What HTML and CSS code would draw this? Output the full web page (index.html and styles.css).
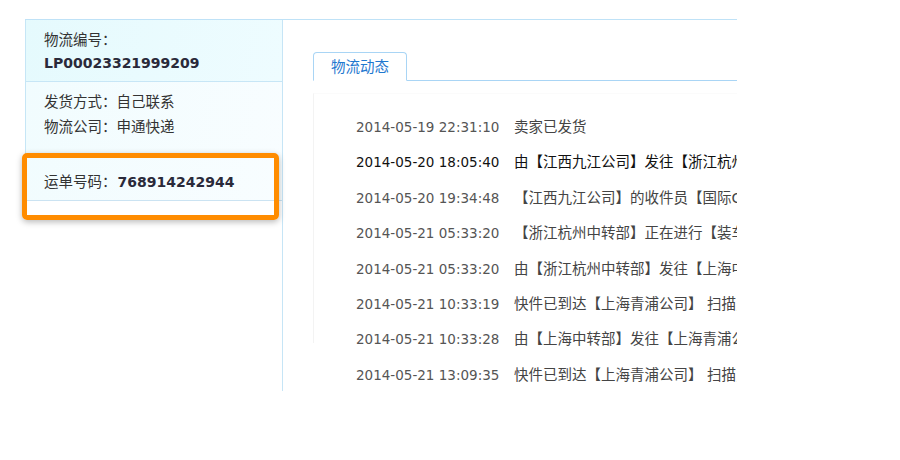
FILE: index.html
```html
<!DOCTYPE html>
<html lang="zh-CN">
<head>
<meta charset="utf-8">
<title>物流详情</title>
<link rel="stylesheet" href="styles.css">
</head>
<body>
<div class="page">
  <aside class="side">
    <div class="info">
      <div class="sec sec-no">
        <div class="lbl">物流编号：</div>
        <div class="num">LP00023321999209</div>
      </div>
      <div class="sec sec-detail">
        <div class="lbl">发货方式：自己联系</div>
        <div class="lbl">物流公司：申通快递</div>
        <div class="waybill"><span class="lbl">运单号码：</span><span class="num">768914242944</span></div>
      </div>
    </div>
    <div class="highlight"></div>
  </aside>
  <main class="main">
    <div class="tabs"><div class="tab">物流动态</div></div>
    <div class="track">
      <ul class="list">
        <li><span class="date">2014-05-19 22:31:10</span><span class="desc">卖家已发货</span></li>
        <li class="cur"><span class="date">2014-05-20 18:05:40</span><span class="desc">由【江西九江公司】发往【浙江杭州中转部】</span></li>
        <li><span class="date">2014-05-20 19:34:48</span><span class="desc">【江西九江公司】的收件员【国际C】已收件</span></li>
        <li><span class="date">2014-05-21 05:33:20</span><span class="desc">【浙江杭州中转部】正在进行【装车】扫描</span></li>
        <li><span class="date">2014-05-21 05:33:20</span><span class="desc">由【浙江杭州中转部】发往【上海中转部】</span></li>
        <li><span class="date">2014-05-21 10:33:19</span><span class="desc">快件已到达【上海青浦公司】 扫描员是【王伟】</span></li>
        <li><span class="date">2014-05-21 10:33:28</span><span class="desc">由【上海中转部】发往【上海青浦公司】</span></li>
        <li><span class="date">2014-05-21 13:09:35</span><span class="desc">快件已到达【上海青浦公司】 扫描员是【王伟】</span></li>
      </ul>
    </div>
  </main>
</div>
</body>
</html>
```
FILE: styles.css
```css
* { box-sizing: border-box; }
html, body { margin: 0; padding: 0; background: #fff; }
body {
  font-family: "DejaVu Sans", "Noto Sans CJK SC", sans-serif;
  font-size: 14px;
  color: #333;
  width: 900px;
  height: 460px;
  overflow: hidden;
}
.page {
  display: flex;
  margin: 19px 0 0 25px;
  width: 712px;
  height: 372px;
  border-top: 1px solid #bfe2f7;
}
.side {
  position: relative;
  width: 258px;
  flex: none;
  border-right: 1px solid #c6e5f6;
}
.info {
  border-left: 1px solid #c6e6f6;
}
.sec { padding-left: 18px; }
.sec-no {
  height: 62px;
  padding-top: 9px;
  background: linear-gradient(100deg, #e5fafd, #eefcff);
  border-bottom: 1px solid #c7e6f6;
}
.sec-no .lbl { line-height: 22px; }
.sec-no .num { line-height: 24px; }
.sec-detail {
  height: 119px;
  padding-top: 8px;
  background: linear-gradient(100deg, #f1fcfe, #f8fdff);
  border-bottom: 1px solid #cbe3f2;
}
.sec-detail > .lbl { line-height: 25px; }
.lbl { font-size: 14.5px; color: #333; }
.num { font-weight: bold; font-size: 14px; color: #2a2a3a; }
.waybill {
  margin-top: 31px;
  line-height: 22px;
  display: flex;
  align-items: baseline;
}
.waybill .num { margin-left: 1px; }
.highlight {
  position: absolute;
  left: -3px;
  top: 133px;
  width: 257px;
  height: 67px;
  border: 5px solid #ff8c00;
  border-radius: 5px;
  box-shadow: 0 2px 6px rgba(0, 0, 0, 0.28);
}
.main {
  flex: 1;
  padding: 32px 0 0 30px;
  overflow: hidden;
}
.tabs {
  display: flex;
  border-bottom: 1px solid #a9d5f5;
  height: 29px;
}
.tab {
  width: 94px;
  height: 29px;
  margin-bottom: -1px;
  background: #fff;
  border: 1px solid #a9d5f5;
  border-bottom-color: #fff;
  border-radius: 4px 4px 0 0;
  color: #1f78cf;
  font-size: 14.5px;
  text-align: center;
  line-height: 28px;
}
.track {
  margin-top: 12px;
  height: 250px;
  border-left: 1px solid #f3f3f3;
  border-top: 1px solid #fbfbfb;
  padding: 16px 0 0 42px;
}
.list {
  list-style: none;
  margin: 0;
  padding: 0;
}
.list li {
  height: 35.4px;
  line-height: 35.4px;
  white-space: nowrap;
  display: flex;
  align-items: baseline;
}
.date {
  width: 158px;
  flex: none;
  font-size: 13.5px;
  color: #555;
}
.desc {
  font-size: 14.5px;
  color: #444;
}
.list li.cur .date, .list li.cur .desc { color: #111; }
```
